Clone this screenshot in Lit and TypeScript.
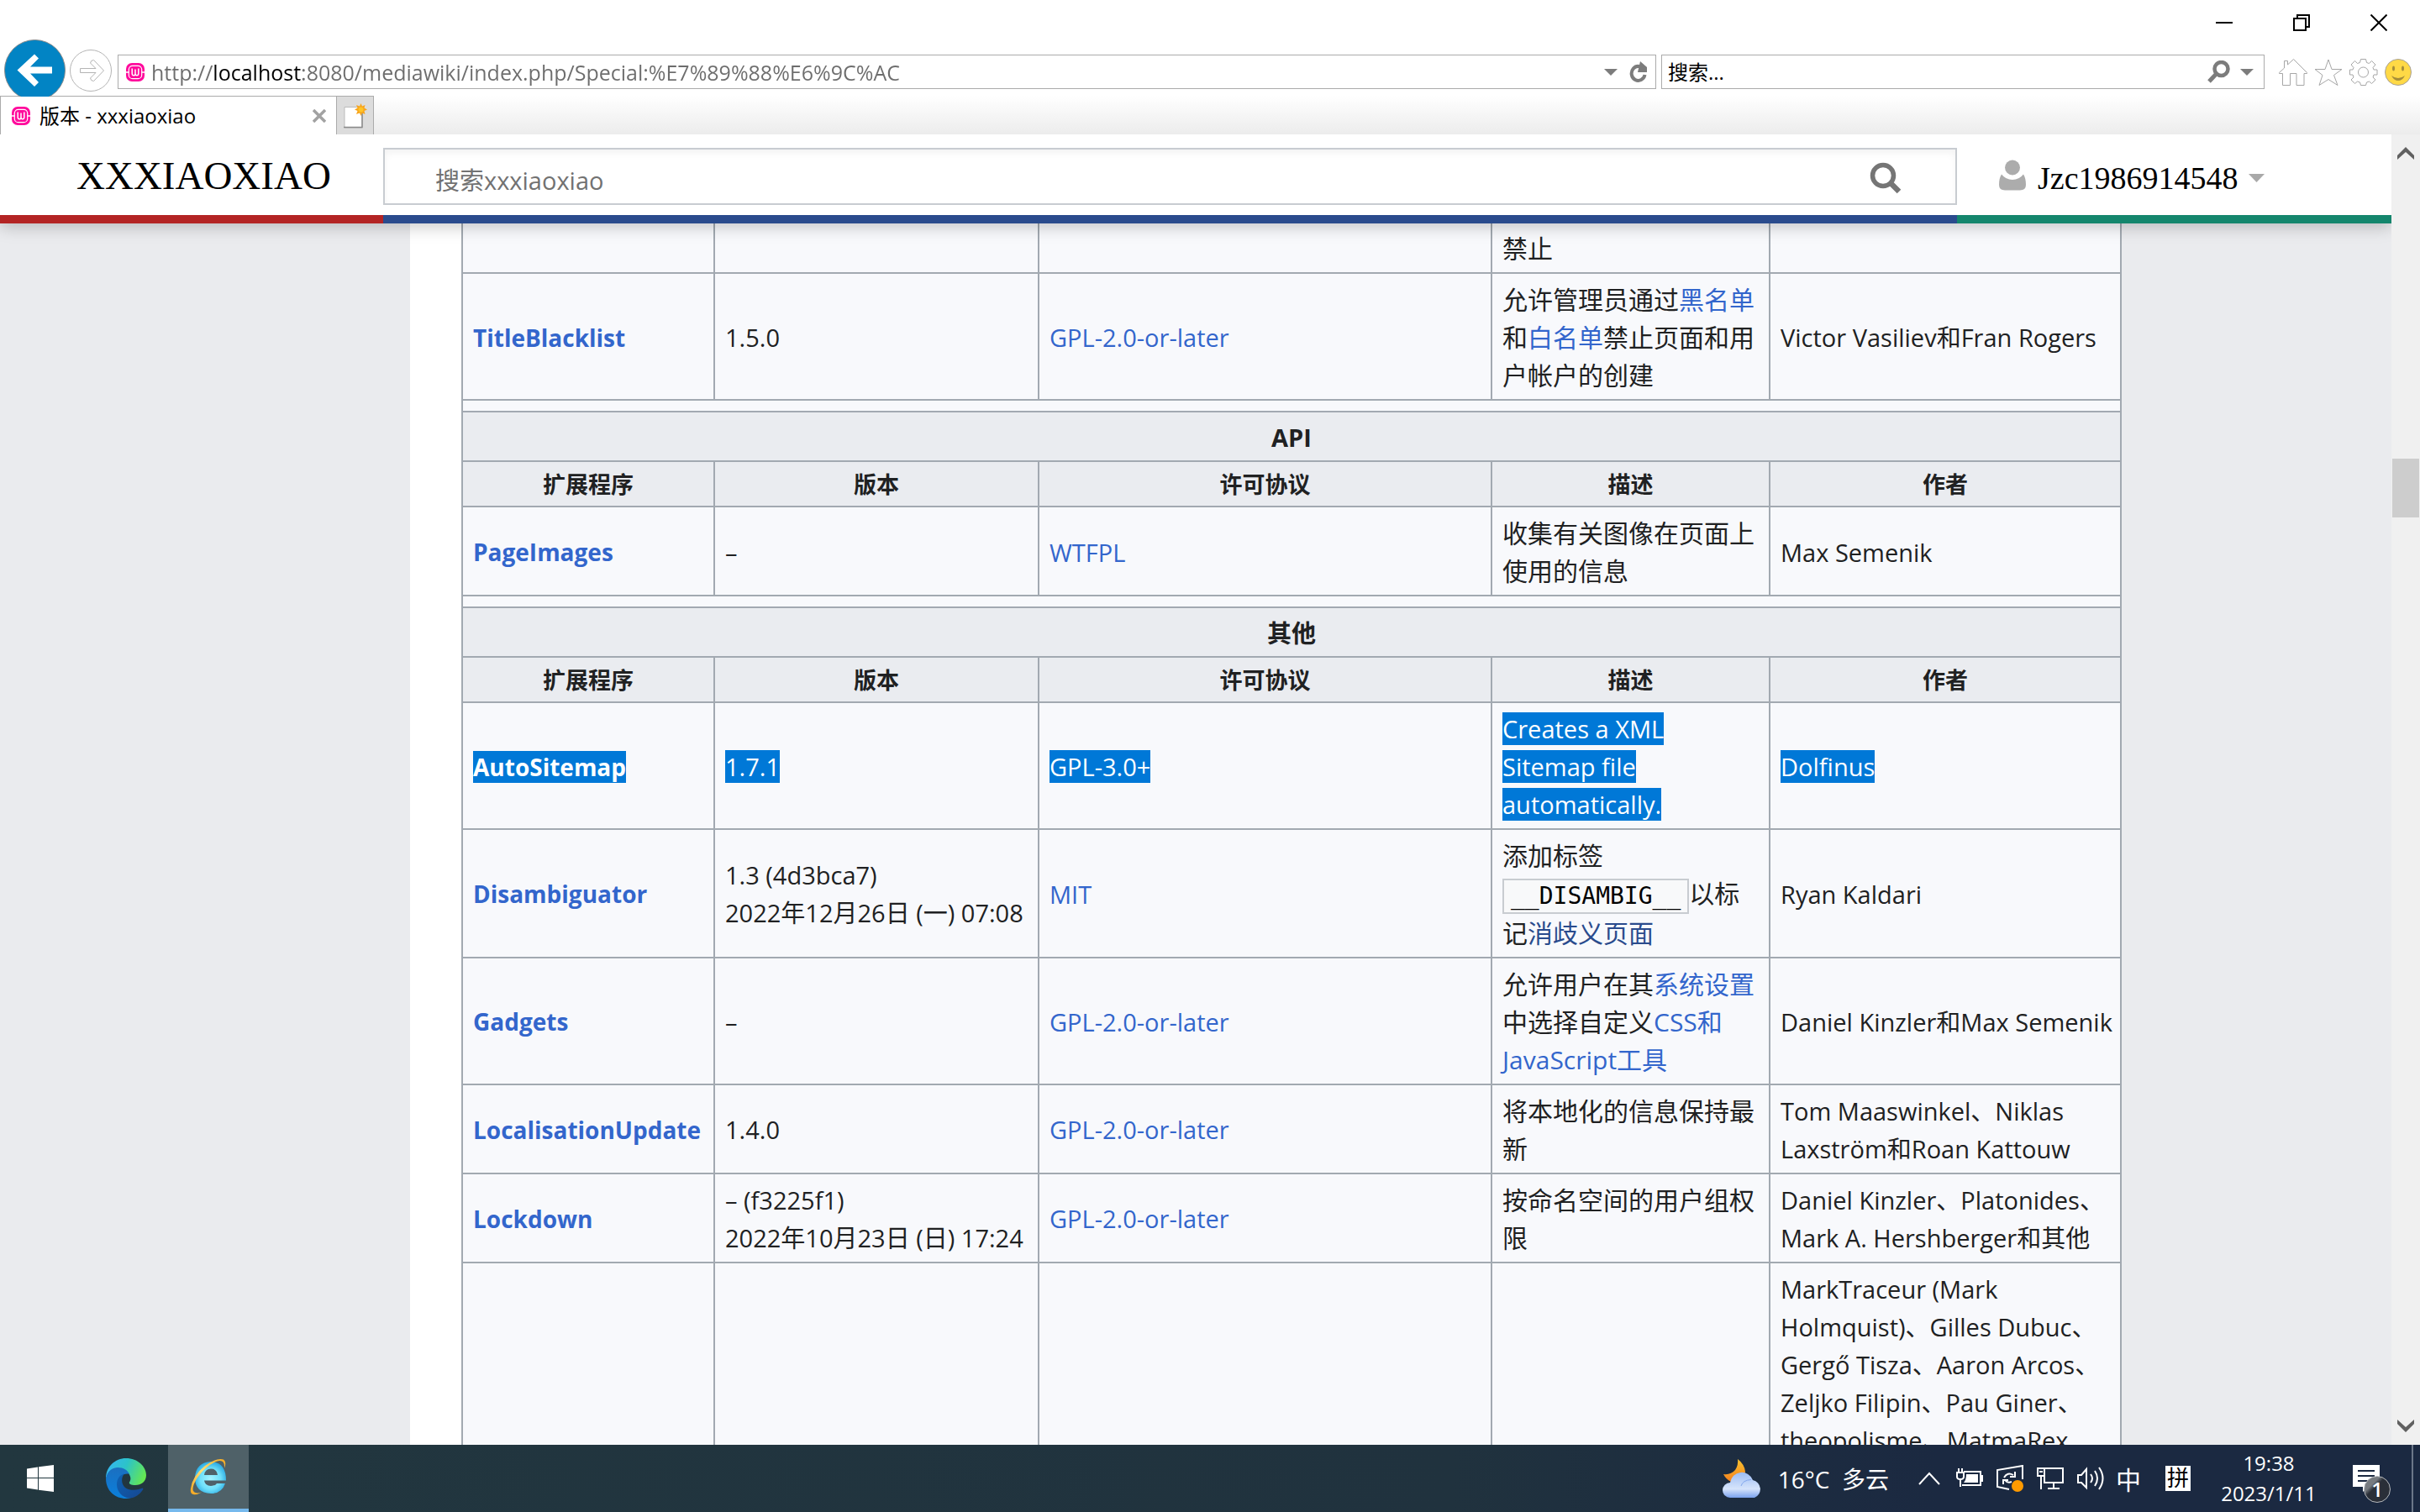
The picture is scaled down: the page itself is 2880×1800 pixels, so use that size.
import { LitElement, html, css, svg, nothing, TemplateResult } from "lit";
import { customElement } from "lit/decorators.js";

interface Row {
  name: string;
  version: string[];
  license: string;
  desc: TemplateResult;
  author: string;
  selected?: boolean;
}

const icon = (w: number, h: number, body: unknown) =>
  html`<svg class="icon" width=${w} height=${h} viewBox="0 0 ${w} ${h}" aria-hidden="true">${body}</svg>`;

const favicon = () =>
  icon(22, 22, svg`
    <rect width="22" height="22" rx="7" fill="#ff0a9c"/>
    <rect x="3.300" y="3.300" width="15.400" height="15.400" rx="4.500" fill="none" stroke="#fff" stroke-width="1.200"/>
    <path d="M0 11H3.500M18.500 11H22" stroke="#fff" stroke-width="1.400"/>
    <path d="M7.200 6.500v6q0 2.300 1.900 2.300t1.900-2.300V7.500v5q0 2.300 1.900 2.300t1.900-2.300v-6" fill="none" stroke="#fff" stroke-width="1.500"/>`);

const triangle = (w: number, h: number, fill: string) =>
  icon(w, h, svg`<path d="M0 0H${w}L${w / 2} ${h}Z" fill=${fill}/>`);

const backIcon = icon(73, 68, svg`
  <circle cx="36.500" cy="36.500" r="36" fill="#0284c4" stroke="#8a8a8a"/>
  <path d="M15.500 36.500L36 17.500L41 22.500L31 32.500H57V40.500H31L41 51L36 56Z" fill="#fff"/>`);

const forwardIcon = icon(50, 50, svg`
  <circle cx="25" cy="25" r="24.500" fill="#fff" stroke="#b4b4b4"/>
  <path d="M12.500 22.500H31L24.500 16Q25 12.500 28.500 12.500L40.500 25L28.500 37.500Q25 37.500 24.500 34L31 27.500H12.500Z" fill="#fff" stroke="#b4b4b4"/>`);

const refreshIcon = icon(22, 26, svg`
  <path d="M17.500 10A8 8.500 0 1 0 18.500 16" fill="none" stroke="#7c7c7c" stroke-width="4"/>
  <path d="M13 0L21 7V13H10Z" fill="#7c7c7c"/>`);

const findIcon = icon(27, 27, svg`
  <circle cx="16.500" cy="10" r="8" fill="none" stroke="#7c7c7c" stroke-width="4.500"/>
  <path d="M11 15.500L2 25" stroke="#7c7c7c" stroke-width="5"/>`);

const homeIcon = icon(34, 32, svg`
  <path d="M.5 16.500L6.500 11V2.500H10.500V7L17.500 .5L33.500 16.500V17.500H30V31.500H21V17.500H13.500V31.500H4.500V17.500H.5Z" fill="#fff" stroke="#a6a6a6"/>`);

const starIcon = icon(34, 32, svg`
  <path d="M17 1L21 12.500H33L23.500 19.500L28 31.500L17 24.500L6 31.500L10 19.500L1 12.500H13Z" fill="#fff" stroke="#a6a6a6"/>`);

const gearIcon = icon(34, 32, svg`
  <path d="M13.500 .5H19.500L20.500 4.500L23.500 5.500L26.500 2.500L31 7L28 10.500L29 13H33V19H29L28 22L31 25L26.500 29.500L23.500 27L20.500 28L19.500 31.500H13.500L12.500 28L9.500 27L6.500 29.500L2 25L5 22L4 19H.5V13H4L5 10.500L2 7L6.500 2.500L9.500 5.500L12.500 4.500Z" fill="#fff" stroke="#a6a6a6"/>
  <circle cx="16.500" cy="16" r="6" fill="#fff" stroke="#a6a6a6"/>`);

const smileIcon = icon(32, 32, svg`
  <circle cx="16" cy="16" r="15.500" fill="#ffd946" stroke="#a8a29a"/>
  <ellipse cx="10.500" cy="11.500" rx="1.500" ry="3" fill="#a58d3a"/><ellipse cx="21.500" cy="11.500" rx="1.500" ry="3" fill="#a58d3a"/>
  <path d="M8 20Q16 26 24 20Q21 26 16 26T8 20Z" fill="#a58d3a"/>`);

const newTabIcon = icon(28, 30, svg`
  <path d="M1 4.500H22V29H1Z" fill="#fff" stroke="#bbb"/><path d="M0 28.500H22V5" fill="none" stroke="#8a8a8a" stroke-width="1.500"/>
  <path d="M20.500 0L22 3.500L25.500 2L24.500 5.500L28 7.500L24.500 9L25.500 13L22 11.500L20.500 15L19 11.500L15 13L16.500 9L13 7.500L16.500 5.500L15 2L19 3.500Z" fill="#f8a51c"/>
  <circle cx="20.500" cy="7.500" r="3" fill="#ffc526"/>`);

const searchIcon = icon(38, 38, svg`
  <circle cx="16" cy="16" r="12.500" fill="none" stroke="#757575" stroke-width="5.500"/>
  <path d="M24.500 24.500L35 35" stroke="#757575" stroke-width="6.500"/>`);

const userIcon = icon(33, 37, svg`
  <circle cx="17" cy="9.500" r="9" fill="#acacac"/>
  <path d="M4 17.500Q9 24 17 24T30 17.500Q33 22 33 30Q33 36.500 26 36.500H8Q1 36.500 1 30Q1 22 4 17.500Z" fill="#acacac"/>`);

const startIcon = icon(32, 32, svg`
  <path d="M0 4.500L13 2.500V15H0ZM14 2.300L32 0V15H14ZM0 16H13V29.500L0 27.500ZM14 16H32V32L14 29.700Z" fill="#fff"/>`);

const edgeIcon = icon(48, 48, svg`
  <defs>
    <linearGradient id="eg" x1="0" y1=".3" x2="1" y2=".6"><stop offset="0" stop-color="#35b6f0"/><stop offset=".45" stop-color="#2cc3c9"/><stop offset="1" stop-color="#66e84f"/></linearGradient>
    <linearGradient id="eb" x1="0" y1="0" x2="0" y2="1"><stop offset="0" stop-color="#1b6fc0"/><stop offset="1" stop-color="#0a80dc"/></linearGradient>
    <linearGradient id="ed" x1="0" y1="0" x2="1" y2="1"><stop offset="0" stop-color="#0d62b4"/><stop offset="1" stop-color="#174790"/></linearGradient>
  </defs>
  <path d="M0 24C0 10 11 0 24 0C38 0 48 10 48 20C48 28 42 32 35 32C30 32 27 30.500 28 28.500C30 26 30 22 27 18C22 11 6 11 0 24Z" fill="url(#eg)"/>
  <path d="M0 24C2 14 9 11 14 11C21 11 26 14 28 19C22 17 14 22 14 31C14 40 21 47 30 47Q27 48 24 48C10 48 0 38 0 24Z" fill="url(#eb)"/>
  <path d="M22 18.500C18 22 17 34 27 37C34 39 40 37 43.500 35.500Q45 36 44 37.500C39 45 33 47.500 28 47.500C19 47 13 39 13 31C13 24 17 19.500 22 18.500Z" fill="url(#ed)"/>`);

const ieIcon = icon(44, 44, svg`
  <defs>
    <radialGradient id="ie" cx=".5" cy=".55" r=".55"><stop offset="0" stop-color="#a5f3ff"/><stop offset=".6" stop-color="#6fe0fa"/><stop offset="1" stop-color="#2aa9e2"/></radialGradient>
    <linearGradient id="io" x1="0" y1="1" x2="1" y2="0"><stop offset="0" stop-color="#f6a51c"/><stop offset=".5" stop-color="#ffe07a"/><stop offset="1" stop-color="#f4a81e"/></linearGradient>
  </defs>
  <path d="M43 26.500H17Q18 33 25 33Q30 33 32 30H42Q38 42 25 42Q6 41 6 23Q7 5 25 4Q43 5 43 26.500ZM17 20H33Q32 12.500 25 12.500T17 20Z" fill="url(#ie)" fill-rule="evenodd"/>
  <path d="M41 12Q44 4 40 1.500Q32-1 18 9Q3 21 1 36Q0 42 4 43Q8 44 14 40.500Q6 43 4 39Q2 34 9 23Q19 9 31 4Q42 0 41 12Z" fill="url(#io)"/>`);

const weatherIcon = icon(48, 46, svg`
  <defs>
    <linearGradient id="mo" x1="0" y1="0" x2="0" y2="1"><stop offset="0" stop-color="#f8c22e"/><stop offset="1" stop-color="#f4811f"/></linearGradient>
    <linearGradient id="cl" x1="0" y1="0" x2="0" y2="1"><stop offset="0" stop-color="#9dbdf4"/><stop offset=".65" stop-color="#d6e4fb"/><stop offset="1" stop-color="#7aa2ee"/></linearGradient>
  </defs>
  <path d="M18 0Q26 6 27 15Q25 25 10 27Q4 24 1 18Q10 19 15 13Q19 7 18 0Z" fill="url(#mo)"/>
  <path d="M9 46A9 9 0 0 1 9 28A14 14 0 0 1 36 25A11 11 0 0 1 38 46Z" fill="url(#cl)"/>
  <path d="M22 32Q24 25 34 24.500" fill="none" stroke="#83a8ee" stroke-width="1"/>`);

const chevronUp = icon(26, 16, svg`<path d="M1 15L13 2L25 15" fill="none" stroke="#fff" stroke-width="2"/>`);

const batteryIcon = icon(32, 24, svg`
  <path d="M9 4H29V20H7M29 9H31V15H29" fill="none" stroke="#fff" stroke-width="2"/>
  <path d="M12 7H26V17H9Q12 14 12 7Z" fill="#fff"/>
  <path d="M1 5H9V10Q9 13 5 13T1 10ZM3 5V0M7 5V0M5 13V22" fill="none" stroke="#fff" stroke-width="2"/>`);

const updateIcon = icon(32, 32, svg`
  <path d="M15 29L1 26V6L31 1V17" fill="none" stroke="#fff" stroke-width="2"/>
  <path d="M9 15Q13 8 20 12M22 8V14H16M18 20Q13 22 10 18M8 23V18H14" fill="none" stroke="#fff" stroke-width="2"/>
  <circle cx="25" cy="25" r="7" fill="#ff9a00"/>`);

const networkIcon = icon(32, 28, svg`
  <path d="M9 2H31V19H9V12M20 19V26M13 26H27" fill="none" stroke="#fff" stroke-width="2"/>
  <path d="M1 2H9V11H1ZM5 11V27M3 6H7" fill="none" stroke="#fff" stroke-width="2"/>`);

const soundIcon = icon(32, 28, svg`
  <path d="M1 10H5L11 3V25L5 19H1Z" fill="none" stroke="#fff" stroke-width="2"/>
  <path d="M16 9Q20 14 16 19M21 5Q27 14 21 23M26 1Q35 14 26 27" fill="none" stroke="#fff" stroke-width="2"/>`);

const noticeIcon = icon(32, 32, svg`
  <path d="M0 0H32V26H18L12 32V26H0Z" fill="#fff"/><path d="M6 7H26M6 13H26M6 19H26" stroke="#1b2941" stroke-width="2"/>`);

const arrow = (d: string) => icon(20, 16, svg`<path d=${d} fill="#606060"/>`);

const rowsTop: Row[] = [
  {
    name: "TitleBlacklist", version: ["1.5.0"], license: "GPL-2.0-or-later",
    desc: html`允许管理员通过<a href="#black">黑名单</a>和<a href="#white">白名单</a>禁止页面和用户帐户的创建`,
    author: "Victor Vasiliev和Fran Rogers",
  },
];

const rowsApi: Row[] = [
  {
    name: "PageImages", version: ["–"], license: "WTFPL",
    desc: html`收集有关图像在页面上使用的信息`, author: "Max Semenik",
  },
];

const rowsOther: Row[] = [
  {
    name: "AutoSitemap", version: ["1.7.1"], license: "GPL-3.0+", selected: true,
    desc: html`<span class="sel latin">Creates a XML Sitemap file automatically.</span>`, author: "Dolfinus",
  },
  {
    name: "Disambiguator", version: ["1.3 (4d3bca7)", "2022年12月26日 (一) 07:08"], license: "MIT",
    desc: html`添加标签<code>__DISAMBIG__</code>以标记<a class="visited" href="#dab">消歧义页面</a>`,
    author: "Ryan Kaldari",
  },
  {
    name: "Gadgets", version: ["–"], license: "GPL-2.0-or-later",
    desc: html`允许用户在其<a href="#prefs">系统设置</a>中选择自定义<a href="#tools">CSS和JavaScript工具</a>`,
    author: "Daniel Kinzler和Max Semenik",
  },
  {
    name: "LocalisationUpdate", version: ["1.4.0"], license: "GPL-2.0-or-later",
    desc: html`将本地化的信息保持最新`, author: "Tom Maaswinkel、Niklas Laxström和Roan Kattouw",
  },
  {
    name: "Lockdown", version: ["– (f3225f1)", "2022年10月23日 (日) 17:24"], license: "GPL-2.0-or-later",
    desc: html`按命名空间的用户组权限`, author: "Daniel Kinzler、Platonides、Mark A. Hershberger和其他",
  },
];

@customElement("wiki-table")
class WikiTable extends LitElement {
  static styles = css`
    :host { display: block; }
    table { width: 100%; table-layout: fixed; border-collapse: collapse; background: #f8f9fc; color: #202122; font: 29px/45px "Open Sans", "Noto Sans CJK SC", sans-serif; }
    .c-name { width: 300px; }
    .c-version { width: 386px; }
    .c-desc { width: 331px; }
    .c-author { width: 418px; }
    td { border: 2px solid #a2a9b1; padding: 8px 8px 6px 12px; text-align: left; vertical-align: middle; }
    th { border: 2px solid #a2a9b1; background: #eaecf0; padding: 7px 12px 5px; font-size: 27px; line-height: 40px; font-weight: 700; text-align: center; }
    .group th { font-size: 29px; line-height: 45px; }
    .gap td { height: 12px; padding: 0; line-height: 0; }
    .desc { font-size: 30px; }
    .latin { font-size: 29px; }
    .name { font-size: 28px; font-weight: 700; }
    a { color: #36c; text-decoration: none; }
    .visited { color: #2a4b8d; }
    .sel, a.sel { background: #0078d7; color: #fff; }
    code { display: inline-block; box-sizing: border-box; height: 42px; border: 2px solid #c8ccd1; padding: 0 8px; color: #000; background: #f8f9fa; font: 28px/38px "DejaVu Sans Mono", monospace; vertical-align: middle; }
  `;

  private heading(title: string) {
    return html`
      <tr class="gap"><td colspan="5"></td></tr>
      <tr class="group"><th colspan="5" scope="colgroup">${title}</th></tr>
      <tr>${["扩展程序", "版本", "许可协议", "描述", "作者"].map((t) => html`<th scope="col">${t}</th>`)}</tr>`;
  }

  private row(r: Row) {
    const sel = r.selected ? "sel" : "";
    return html`<tr>
      <td><a class="name ${sel}" href="#${r.name}">${r.name}</a></td>
      <td>${r.version.map((v, i) => html`${i ? html`<br>` : nothing}<span class=${sel}>${v}</span>`)}</td>
      <td><a class=${sel} href="#license">${r.license}</a></td>
      <td class="desc">${r.desc}</td>
      <td><span class=${sel}>${r.author}</span></td>
    </tr>`;
  }

  render() {
    return html`<table>
      <colgroup><col class="c-name"><col class="c-version"><col><col class="c-desc"><col class="c-author"></colgroup>
      <tbody>
        <tr><td></td><td></td><td></td><td class="desc">禁止</td><td></td></tr>
        ${rowsTop.map((r) => this.row(r))}
        ${this.heading("API")}
        ${rowsApi.map((r) => this.row(r))}
        ${this.heading("其他")}
        ${rowsOther.map((r) => this.row(r))}
        <tr><td></td><td></td><td></td><td></td>
          <td>MarkTraceur (Mark Holmquist)、Gilles Dubuc、Gergő Tisza、Aaron Arcos、Zeljko Filipin、Pau Giner、theopolisme、MatmaRex</td></tr>
      </tbody>
    </table>`;
  }
}

@customElement("app-root")
class AppRoot extends LitElement {
  static styles = css`
    :host { display: grid; grid-template-rows: auto minmax(0, 1fr) 80px; height: 100vh; overflow: hidden; background: #fff; font-family: "Open Sans", "Noto Sans CJK SC", sans-serif; }
    button { border: 0; margin: 0; padding: 0; background: none; font: inherit; color: inherit; display: flex; align-items: center; justify-content: center; }
    input { border: 0; margin: 0; padding: 0; background: none; font: inherit; outline: 0; min-width: 0; flex: 1; }
    .icon { display: block; flex: none; }

    .titlebar { height: 47px; display: flex; justify-content: flex-end; padding-right: 3px; }
    .titlebar button { width: 92px; height: 54px; }
    .nav { height: 67px; display: flex; align-items: flex-start; padding: 0 10px 0 5px; }
    .back { height: 68px; position: relative; z-index: 1; }
    .fwd { margin: 12px 7px 0 5px; }
    .box { box-sizing: border-box; height: 41px; margin-top: 18px; border: 1px solid #ababab; display: flex; align-items: center; font-size: 24px; background: #fff; }
    .address { flex: 1; padding: 0 9px; gap: 8px; font-size: 25px; }
    .address input { height: 38px; color: transparent; background: linear-gradient(90deg, #6d6d6d 73px, #000 73px 178px, #6d6d6d 178px); -webkit-background-clip: text; background-clip: text; }
    .address button { margin-left: 6px; }
    .find { width: 718px; margin-left: 6px; padding: 0 12px 0 7px; gap: 12px; }
    .find input::placeholder { color: #000; opacity: 1; }
    .tools { display: flex; gap: 8px; margin: 23px 0 0 17px; }

    .tabs { height: 46px; display: flex; background: linear-gradient(#fff, #ececec); }
    .tab { box-sizing: border-box; width: 400px; border: 1px solid #ababab; border-width: 1px 0 0 1px; background: #fff; display: flex; align-items: center; padding: 0 12px 0 13px; font-size: 24px; gap: 11px; }
    .tab a { flex: 1; color: #000; text-decoration: none; line-height: 44px; }
    .new { box-sizing: border-box; width: 45px; border: 1px solid #ababab; border-bottom: 0; background: #dcdcdc; }

    .view { display: grid; grid-template-columns: minmax(0, 1fr) 34px; min-height: 0; }
    .page { display: flex; flex-direction: column; min-height: 0; overflow: hidden; background: #eaebee; }
    .head { display: grid; grid-template-columns: 456fr 1873fr 517fr; position: relative; z-index: 1; background: #fff; box-shadow: 0 4px 18px rgba(0, 0, 0, 0.22); }
    .head > * { box-sizing: border-box; height: 106px; border-bottom: 10px solid; display: flex; }
    .brand { border-color: #b32424; padding-left: 91px; color: #000; font: 47px/98px "Liberation Serif", serif; text-decoration: none; }
    .search { border-color: #2a4b8d; padding: 16px 0 12px; }
    .field { flex: 1; display: flex; align-items: center; box-sizing: border-box; border: 2px solid #c8ccd1; padding: 0 64px 0 60px; box-shadow: inset 0 4px 8px rgba(0, 0, 0, 0.05); font-size: 29px; }
    .field button { padding-top: 4px; }
    .field input { padding-top: 8px; }
    .field input::placeholder { color: #727272; opacity: 1; }
    .user { border-color: #14866d; padding-left: 49px; }
    .user button { gap: 12px; font: 38px/60px "Liberation Serif", serif; color: #000; height: 96px; padding-top: 8px; }
    .user .icon:first-child { margin: 0 2px 8px 0; }
    .main { flex: 1; min-height: 0; overflow: hidden; display: grid; grid-template-columns: 488fr 2037fr 321fr; }
    .content { grid-column: 2; padding-left: 61px; background: #fff; }
    .content wiki-table { margin-top: -3px; }

    .scroll { background: #f0f0f0; display: grid; grid-template-rows: 44px 342fr 70px 1060fr 44px; padding: 0 1px; }
    .thumb { background: #cdcdcd; grid-row: 3; }
    .down { grid-row: 5; }

    .taskbar { display: flex; background: linear-gradient(90deg, #22373f 0%, #20323e 60%, #1b2941 80%, #1b2941); color: #fff; }
    .taskbar button { height: 80px; }
    .start { width: 102px; padding-right: 6px; box-sizing: border-box; }
    .edge { width: 96px; }
    .ie { width: 96px; background: #4f6168; box-sizing: border-box; border-bottom: 4px solid #76b9ed; margin-left: 2px; }
    .weather { margin-left: auto; gap: 18px; padding-right: 24px; font-size: 28px; white-space: pre; }
    .tray { width: 48px; }
    .lang { width: 42px; font-size: 30px; }
    .ime { width: 76px; }
    .pin { width: 30px; height: 30px; background: #fff; color: #000; font-size: 26px; line-height: 29px; }
    .clock { width: 140px; flex-direction: column; font-size: 24px; line-height: 36px; }
    .notice { width: 100px; position: relative; }
    .notice .icon { margin-left: -9px; }
    .badge { position: absolute; left: 43px; top: 37px; width: 30px; height: 30px; border: 1px solid #b5b8bc; border-radius: 50%; background: linear-gradient(135deg, #777b80 30%, #2a2f38 42%); font-size: 24px; line-height: 30px; font-weight: 600; }
    .desk { border-left: 2px solid #6c7788; width: 10px; box-sizing: border-box; }
  `;

  render() {
    return html`
      <header>
        <div class="titlebar">
          <button aria-label="最小化">${icon(20, 20, svg`<path d="M0 10H20" stroke="#000" stroke-width="2"/>`)}</button>
          <button aria-label="还原">${icon(20, 20, svg`<path d="M1 5H15V19H1ZM5 5V1H19V15H15" fill="none" stroke="#000" stroke-width="2"/>`)}</button>
          <button aria-label="关闭">${icon(20, 20, svg`<path d="M.5 .5L19.500 19.500M19.500 .5L.5 19.500" stroke="#000" stroke-width="2"/>`)}</button>
        </div>
        <nav class="nav">
          <button class="back" aria-label="后退">${backIcon}</button>
          <button class="fwd" aria-label="前进">${forwardIcon}</button>
          <div class="box address">${favicon()}
            <input aria-label="地址" value="http://localhost:8080/mediawiki/index.php/Special:%E7%89%88%E6%9C%AC">
            ${triangle(16, 8, "#7c7c7c")}
            <button aria-label="刷新">${refreshIcon}</button>
          </div>
          <div class="box find">
            <input aria-label="搜索" placeholder="搜索...">
            <button aria-label="搜索">${findIcon}</button>${triangle(16, 8, "#7c7c7c")}
          </div>
          <div class="tools">
            <button aria-label="主页">${homeIcon}</button>
            <button aria-label="收藏">${starIcon}</button>
            <button aria-label="工具">${gearIcon}</button>
            <button aria-label="反馈">${smileIcon}</button>
          </div>
        </nav>
        <div class="tabs">
          <div class="tab">${favicon()}<a href="#tab">版本 - xxxiaoxiao</a>
            <button aria-label="关闭标签页">${icon(16, 16, svg`<path d="M1 1L15 15M15 1L1 15" stroke="#a2a2a2" stroke-width="3.500"/>`)}</button></div>
          <button class="new" aria-label="新建标签页">${newTabIcon}</button>
        </div>
      </header>

      <div class="view">
        <div class="page">
          <div class="head">
            <a class="brand" href="#home">XXXIAOXIAO</a>
            <div class="search"><div class="field">
              <input aria-label="搜索xxxiaoxiao" placeholder="搜索xxxiaoxiao">
              <button aria-label="搜索">${searchIcon}</button></div></div>
            <div class="user"><button>${userIcon}<span>Jzc1986914548</span>${triangle(19, 10, "#a9a9a9")}</button></div>
          </div>
          <div class="main"><main class="content"><wiki-table></wiki-table></main></div>
        </div>
        <div class="scroll">
          <button aria-label="向上">${arrow("M0 11L10 1L20 11V16L10 7L0 16Z")}</button>
          <div class="thumb"></div>
          <button class="down" aria-label="向下">${arrow("M0 0L10 9L20 0V5L10 15L0 5Z")}</button>
        </div>
      </div>

      <footer class="taskbar">
        <button class="start" aria-label="开始">${startIcon}</button>
        <button class="edge" aria-label="Edge">${edgeIcon}</button>
        <button class="ie" aria-label="Internet Explorer">${ieIcon}</button>
        <button class="weather">${weatherIcon}<span>16°C  多云</span></button>
        <button class="tray" aria-label="更多">${chevronUp}</button>
        <button class="tray" aria-label="电池">${batteryIcon}</button>
        <button class="tray" aria-label="更新">${updateIcon}</button>
        <button class="tray" aria-label="网络">${networkIcon}</button>
        <button class="tray" aria-label="音量">${soundIcon}</button>
        <button class="lang">中</button>
        <button class="ime"><span class="pin">拼</span></button>
        <button class="clock"><span>19:38</span><span>2023/1/11</span></button>
        <button class="notice" aria-label="通知">${noticeIcon}<span class="badge">1</span></button>
        <div class="desk"></div>
      </footer>`;
  }
}
